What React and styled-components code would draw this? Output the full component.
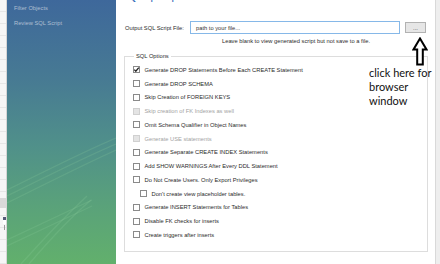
import React from "react";
import styled, { createGlobalStyle } from "styled-components";

const GlobalStyle = createGlobalStyle`
  html, body {
    margin: 0;
    padding: 0;
    overflow: hidden;
    background: #ffffff;
  }
`;

const options = [
  { label: "Generate DROP Statements Before Each CREATE Statement", checked: true },
  { label: "Generate DROP SCHEMA" },
  { label: "Skip Creation of FOREIGN KEYS" },
  { label: "Skip creation of FK Indexes as well", disabled: true },
  { label: "Omit Schema Qualifier in Object Names" },
  { label: "Generate USE statements", disabled: true },
  { label: "Generate Separate CREATE INDEX Statements" },
  { label: "Add SHOW WARNINGS After Every DDL Statement" },
  { label: "Do Not Create Users. Only Export Privileges" },
  { label: "Don't create view placeholder tables.", indent: true },
  { label: "Generate INSERT Statements for Tables" },
  { label: "Disable FK checks for inserts" },
  { label: "Create triggers after inserts" },
];

export default function App() {
  return (
    <>
      <GlobalStyle />
      <Page>
        <Backdrop>
          <BackdropBar />
          <BackdropIcon />
        </Backdrop>

        <Sidebar>
          <NavItem>Filter Objects</NavItem>
          <NavItem>Review SQL Script</NavItem>
          <Streaks viewBox="0 0 109 264" preserveAspectRatio="none">
            <path d="M0 190 C40 170 80 150 109 138" />
            <path d="M0 196 C40 176 80 156 109 144" />
            <path d="M0 203 C40 183 80 163 109 150" />
            <path d="M0 240 C30 226 60 212 85 200" />
            <path d="M0 246 C30 232 60 218 85 206" />
            <path d="M14 264 C40 235 65 210 80 196" />
            <path d="M22 264 C46 236 70 212 84 200" />
          </Streaks>
        </Sidebar>

        <Main>
          <Title>SQL Export Options</Title>

          <OutputRow>
            <FieldLabel>Output SQL Script File:</FieldLabel>
            <PathInput>path to your file...</PathInput>
            <BrowseButton>...</BrowseButton>
          </OutputRow>
          <Hint>Leave blank to view generated script but not save to a file.</Hint>

          <Options>
            <legend>SQL Options</legend>
            {options.map(o => (
              <Option key={o.label} $indent={o.indent} $disabled={o.disabled}>
                <Box $disabled={o.disabled}>
                  {o.checked && (
                    <svg width="7" height="7" viewBox="0 0 7 7">
                      <polyline
                        points="1.3,3.6 2.8,5.2 5.8,1.6"
                        fill="none"
                        stroke="#222"
                        strokeWidth="1.3"
                      />
                    </svg>
                  )}
                </Box>
                {o.label}
              </Option>
            ))}
          </Options>
        </Main>

        <ScrollEdge />

        <Callout>
          <svg width="16" height="29" viewBox="0 0 16 29">
            <path
              d="M8 1.5 L14.5 12.5 L10.8 12.5 L10.8 27.5 L5.2 27.5 L5.2 12.5 L1.5 12.5 Z"
              fill="#fff"
              stroke="#000"
              strokeWidth="2"
              strokeLinejoin="miter"
            />
          </svg>
          <CalloutText>
            click here for
            <br />
            browser
            <br />
            window
          </CalloutText>
        </Callout>
      </Page>
    </>
  );
}

const Page = styled.div`
  position: relative;
  display: flex;
  width: 440px;
  height: 264px;
  overflow: hidden;
  font-family: "Liberation Sans", Arial, sans-serif;
  font-size: 5.75px;
  color: #2b2b2b;
`;

const Backdrop = styled.div`
  width: 6px;
  flex-shrink: 0;
  border-right: 1px solid #d6d6d6;
  background: repeating-linear-gradient(
    to bottom,
    #f6f6f6 0,
    #f6f6f6 11px,
    #e7e7e7 11px,
    #e7e7e7 12px
  );
  display: flex;
  flex-direction: column;
  padding-top: 198px;
  gap: 9px;
`;

const BackdropBar = styled.div`
  height: 10px;
  background: #d9d9d9;
`;

const BackdropIcon = styled.div`
  width: 3px;
  height: 3px;
  margin-left: 3px;
  background: #555b78;
  border-bottom: 4px solid #fff;
  box-shadow: 0 7px 0 -1px #9a9a9a;
`;

const Sidebar = styled.div`
  position: relative;
  width: 109px;
  flex-shrink: 0;
  background: linear-gradient(
    to bottom,
    #3e689b 0%,
    #477a93 30%,
    #50908a 55%,
    #5aa27a 78%,
    #62b06c 100%
  );
  padding: 5px 0 0 7px;
  box-sizing: border-box;
  display: flex;
  flex-direction: column;
  gap: 7.5px;
`;

const NavItem = styled.div`
  color: #aebfd2;
  font-size: 5.75px;
  line-height: 7px;
`;

const Streaks = styled.svg`
  position: absolute;
  left: 0;
  top: 0;
  width: 109px;
  height: 264px;
  pointer-events: none;
  path {
    fill: none;
    stroke: #8fd0a0;
    stroke-width: 1.3;
    opacity: 0.2;
  }
`;

const Main = styled.div`
  flex: 1;
  display: flex;
  flex-direction: column;
  align-items: flex-start;
  padding: 0 7px 0 8px;
  background: #ffffff;
`;

const Title = styled.div`
  margin: -6px 0 0 2px;
  font-size: 7px;
  line-height: 8px;
  font-weight: bold;
  color: #2a63b6;
`;

const OutputRow = styled.div`
  display: flex;
  align-items: center;
  margin-top: 19px;
  height: 13px;
`;

const FieldLabel = styled.div`
  width: 66px;
  padding-left: 1px;
  box-sizing: border-box;
  white-space: nowrap;
`;

const PathInput = styled.div`
  width: 210px;
  height: 13px;
  box-sizing: border-box;
  border: 1px solid #86b8e8;
  padding-left: 5px;
  display: flex;
  align-items: center;
  color: #333;
`;

const BrowseButton = styled.div`
  width: 21px;
  height: 11px;
  margin-left: 5px;
  box-sizing: border-box;
  border: 1px solid #b2b2b2;
  background: #e6e6e6;
  display: flex;
  align-items: center;
  justify-content: center;
  color: #333;
  line-height: 6px;
`;

const Hint = styled.div`
  margin: 3px 0 0 67px;
  width: 210px;
  text-align: center;
  line-height: 8px;
  white-space: nowrap;
`;

const Options = styled.fieldset`
  margin: 7px 0 0 0;
  width: 304px;
  box-sizing: border-box;
  border: 1px solid #dddddd;
  padding: 3px 0 9px 8px;
  min-inline-size: 0;
  legend {
    padding: 0 2px;
    margin-left: 1px;
    line-height: 8px;
  }
`;

const Option = styled.div`
  display: flex;
  align-items: center;
  height: 13.75px;
  gap: 4.5px;
  padding-left: ${p => (p.$indent ? "7px" : "0")};
  color: ${p => (p.$disabled ? "#a3a3a3" : "#2b2b2b")};
  white-space: nowrap;
`;

const Box = styled.span`
  width: 7px;
  height: 7px;
  box-sizing: border-box;
  border: 1px solid ${p => (p.$disabled ? "#d0d0d0" : "#8a8a8a")};
  background: ${p => (p.$disabled ? "#e4e4e4" : "#ffffff")};
  display: flex;
  align-items: center;
  justify-content: center;
  flex-shrink: 0;
  svg {
    display: block;
    margin: -1px;
  }
`;

const ScrollEdge = styled.div`
  width: 4px;
  flex-shrink: 0;
  border-left: 1px solid #d9d9d9;
  background: #eeeeee;
`;

const Callout = styled.div`
  position: absolute;
  left: 369px;
  top: 37px;
  width: 62px;
  display: flex;
  flex-direction: column;
  align-items: flex-end;
  svg {
    display: block;
    margin-right: 3px;
  }
`;

const CalloutText = styled.div`
  align-self: flex-start;
  font-family: Lato, "Open Sans", sans-serif;
  font-size: 11px;
  line-height: 14px;
  color: #111;
  white-space: nowrap;
`;
